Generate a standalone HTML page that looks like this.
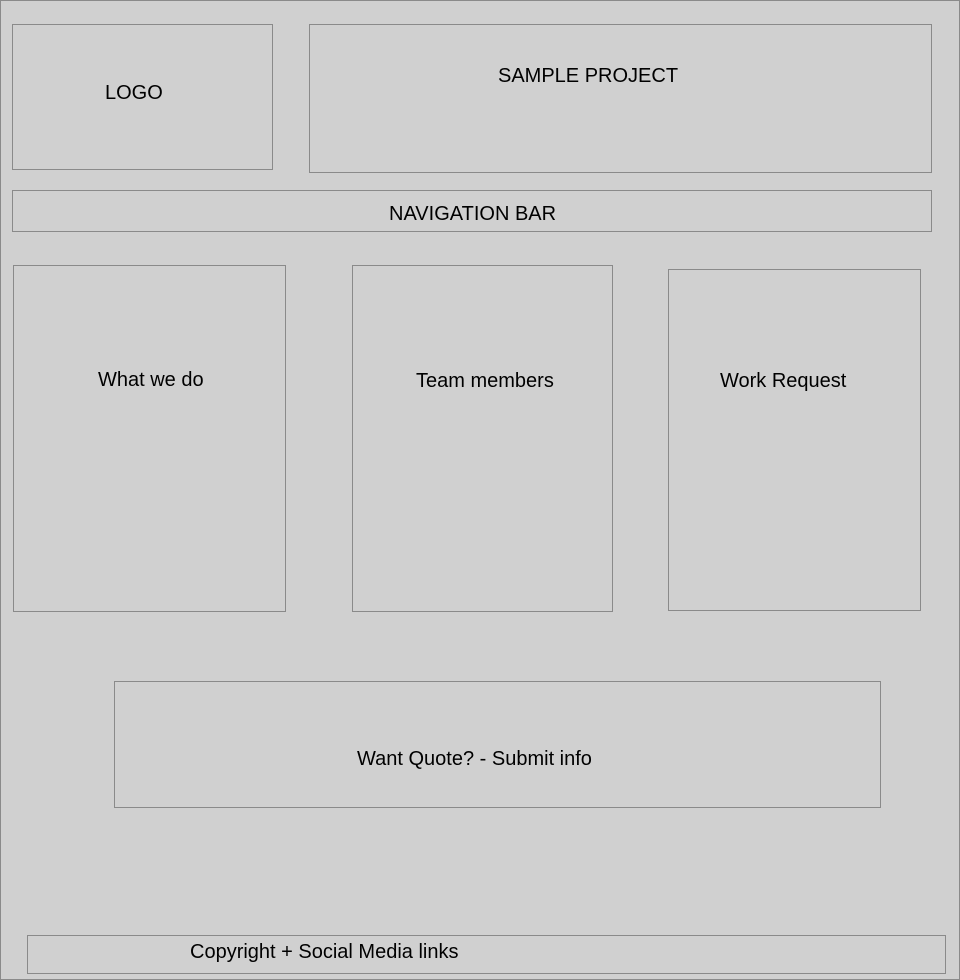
<!DOCTYPE html>
<html><head><style>
html,body{margin:0;padding:0;}
body{width:960px;height:980px;background:#d0d0d0;position:relative;overflow:hidden;font-family:"Liberation Sans",Arial,sans-serif;font-size:20px;color:#000;}
.frame{position:absolute;left:0;top:0;width:958px;height:978px;border:1px solid #8a8a8a;}
.b{position:absolute;border:1px solid #8a8a8a;box-sizing:border-box;}
.t{position:absolute;white-space:nowrap;line-height:22px;}
</style></head><body>
<div class="frame"></div>
<div class="b" style="left:12px;top:24px;width:261px;height:146px"></div>
<div class="t" style="left:105px;top:82px">LOGO</div>
<div class="b" style="left:309px;top:24px;width:623px;height:149px"></div>
<div class="t" style="left:498px;top:65px">SAMPLE PROJECT</div>
<div class="b" style="left:12px;top:190px;width:920px;height:42px"></div>
<div class="t" style="left:389px;top:203px">NAVIGATION BAR</div>
<div class="b" style="left:13px;top:265px;width:273px;height:347px"></div>
<div class="t" style="left:98px;top:369px">What we do</div>
<div class="b" style="left:352px;top:265px;width:261px;height:347px"></div>
<div class="t" style="left:416px;top:370px">Team members</div>
<div class="b" style="left:668px;top:269px;width:253px;height:342px"></div>
<div class="t" style="left:720px;top:370px">Work Request</div>
<div class="b" style="left:114px;top:681px;width:767px;height:127px"></div>
<div class="t" style="left:357px;top:748px">Want Quote? - Submit info</div>
<div class="b" style="left:27px;top:935px;width:919px;height:39px"></div>
<div class="t" style="left:190px;top:941px">Copyright + Social Media links</div>
</body></html>
